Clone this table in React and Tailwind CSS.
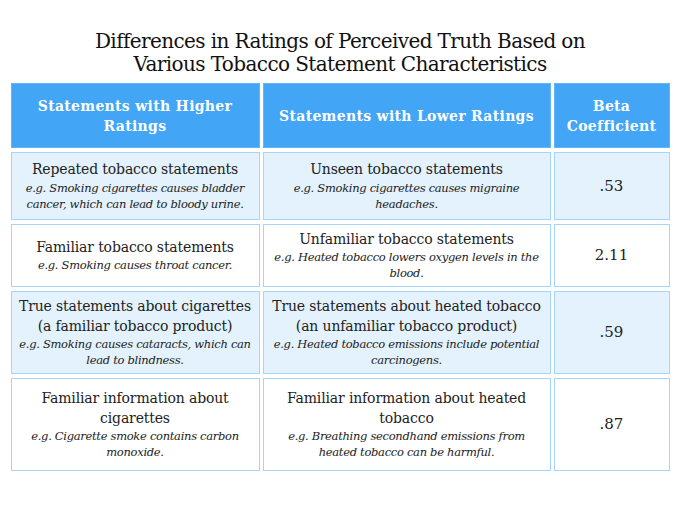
const rows = [
  {
    hi: ["Repeated tobacco statements"],
    hiEx: ["e.g. Smoking cigarettes causes bladder", "cancer, which can lead to bloody urine."],
    lo: ["Unseen tobacco statements"],
    loEx: ["e.g. Smoking cigarettes causes migraine", "headaches."],
    beta: ".53",
    h: "h-[68px]",
  },
  {
    hi: ["Familiar tobacco statements"],
    hiEx: ["e.g. Smoking causes throat cancer."],
    lo: ["Unfamiliar tobacco statements"],
    loEx: ["e.g. Heated tobacco lowers oxygen levels in the", "blood."],
    beta: "2.11",
    h: "h-[63px]",
  },
  {
    hi: ["True statements about cigarettes", "(a familiar tobacco product)"],
    hiEx: ["e.g. Smoking causes cataracts, which can", "lead to blindness."],
    lo: ["True statements about heated tobacco", "(an unfamiliar tobacco product)"],
    loEx: ["e.g. Heated tobacco emissions include potential", "carcinogens."],
    beta: ".59",
    h: "h-[83px]",
  },
  {
    hi: ["Familiar information about", "cigarettes"],
    hiEx: ["e.g. Cigarette smoke contains carbon", "monoxide."],
    lo: ["Familiar information about heated", "tobacco"],
    loEx: ["e.g. Breathing secondhand emissions from", "heated tobacco can be harmful."],
    beta: ".87",
    h: "h-[93px]",
  },
];

function Statement({ title, example }) {
  return (
    <>
      {title.map((t) => (
        <div key={t} className="whitespace-nowrap text-[14px] leading-[19.5px] tracking-[-0.15px] text-[#222]">
          {t}
        </div>
      ))}
      {example.map((t) => (
        <div key={t} className="whitespace-nowrap text-[11.5px] leading-[16px] tracking-[-0.3px] italic text-[#222]">
          {t}
        </div>
      ))}
    </>
  );
}

export default function App() {
  const head =
    "bg-[#42a5f5] border border-[#64b5f6] px-1 text-[14px] leading-[20px] font-bold tracking-[0.3px] text-white";
  return (
    <div
      className="w-[680px] h-[510px] bg-white pt-[30px]"
      style={{ fontFamily: '"DejaVu Serif", "Liberation Serif", serif' }}
    >
      <h1 className="text-center text-[20px] leading-[23px] text-[#111] tracking-[-0.6px]">
        Differences in Ratings of Perceived Truth Based on
        <br />
        Various Tobacco Statement Characteristics
      </h1>

      <table className="mt-[3px] mx-auto w-[665px] table-fixed border-separate border-spacing-x-[3px] border-spacing-y-[4px] text-center">
        <colgroup>
          <col className="w-[249px]" />
          <col className="w-[288px]" />
          <col className="w-[116px]" />
        </colgroup>
        <thead>
          <tr className="h-[65px]">
            <th className={head}>
              Statements with Higher
              <br />
              Ratings
            </th>
            <th className={head}>Statements with Lower Ratings</th>
            <th className={head}>
              Beta
              <br />
              Coefficient
            </th>
          </tr>
        </thead>
        <tbody>
          {rows.map((r, i) => {
            const bg = i % 2 === 0 ? "bg-[#e3f2fd]" : "bg-white";
            return (
              <tr key={i} className={r.h}>
                <td className={`${bg} border border-[#a6d4fa]`}>
                  <Statement title={r.hi} example={r.hiEx} />
                </td>
                <td className={`${bg} border border-[#a6d4fa]`}>
                  <Statement title={r.lo} example={r.loEx} />
                </td>
                <td className={`${bg} border border-[#a6d4fa] text-[15px] text-[#222]`}>
                  {r.beta}
                </td>
              </tr>
            );
          })}
        </tbody>
      </table>
    </div>
  );
}
